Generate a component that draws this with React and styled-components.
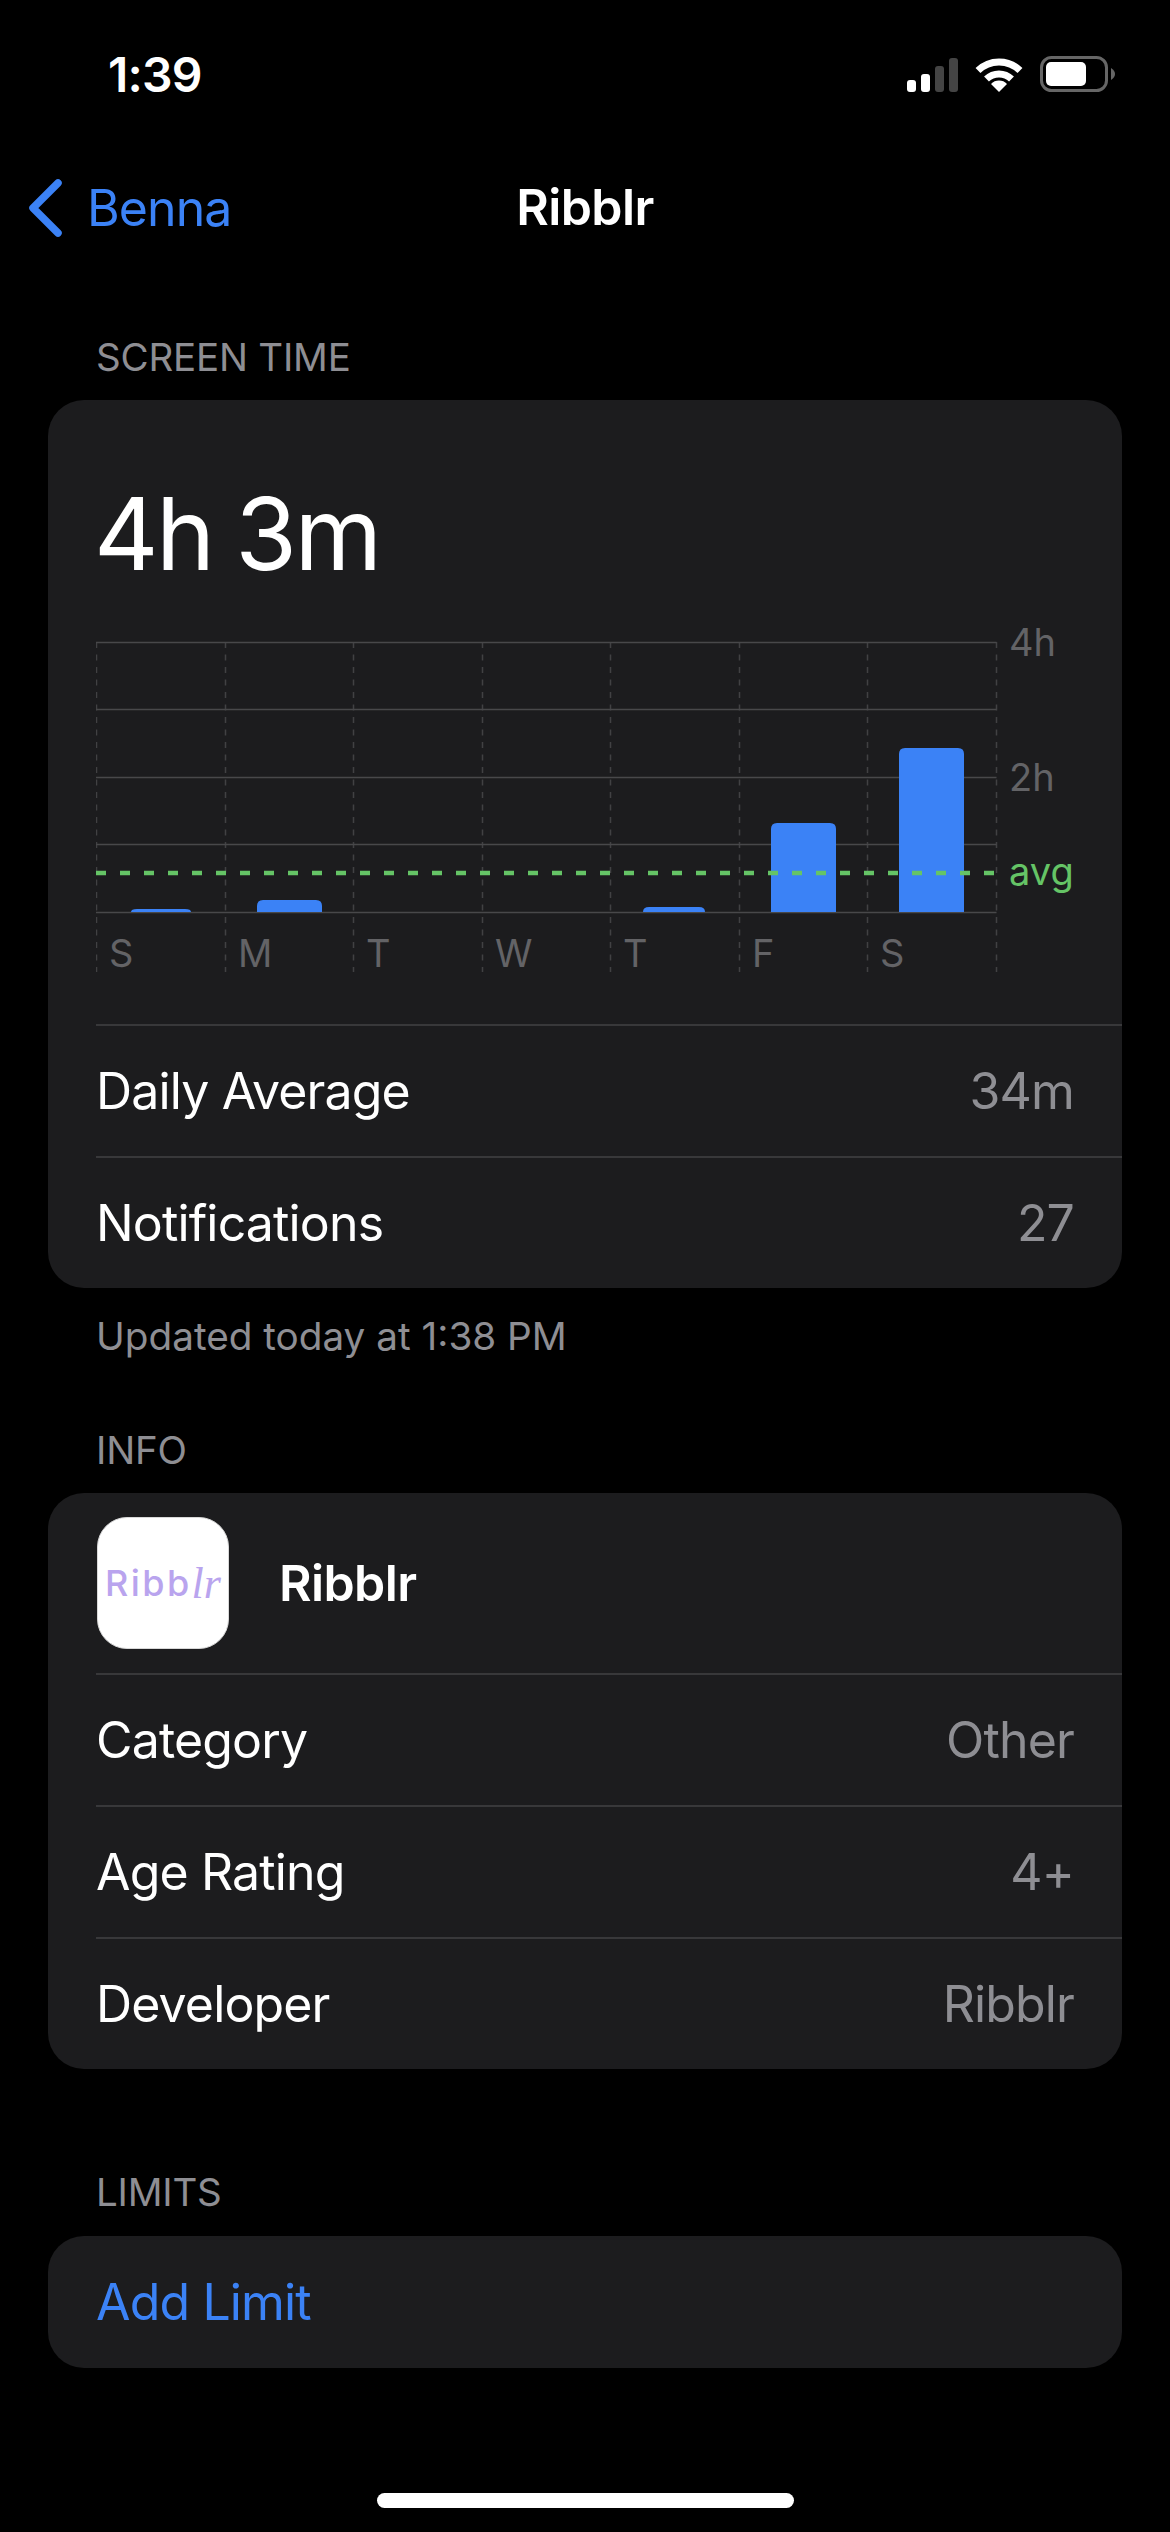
import React from "react";
import styled, { createGlobalStyle } from "styled-components";

const GlobalStyle = createGlobalStyle`
  html, body { margin: 0; padding: 0; background: #000; }
  body { font-family: Inter, "Liberation Sans", sans-serif; -webkit-font-smoothing: antialiased; }
`;

const Page = styled.div`
  width: 1170px;
  height: 2532px;
  background: #000;
  color: #fff;
  overflow: hidden;
  position: relative;
`;

const StatusBar = styled.div`
  height: 148px;
  display: flex;
  align-items: center;
  justify-content: space-between;
  padding: 0 55px 0 108px;
  box-sizing: border-box;
`;

const Clock = styled.div`
  font-size: 48px;
  font-weight: 600;
  letter-spacing: -0.8px;
`;

const StatusIcons = styled.div`
  display: flex;
  align-items: flex-end;
  gap: 17px;
  padding-bottom: 1px;
`;

const NavBar = styled.div`
  height: 118px;
  position: relative;
  display: flex;
  align-items: center;
  justify-content: center;
`;

const BackLink = styled.div`
  position: absolute;
  left: 28px;
  top: 30px;
  display: flex;
  align-items: center;
  gap: 25px;
  color: #3b82f6;
  font-size: 50px;
  letter-spacing: -0.9px;
`;

const NavTitle = styled.div`
  font-size: 50px;
  font-weight: 600;
  letter-spacing: -0.6px;
`;

const SectionLabel = styled.div`
  height: 46px;
  line-height: 46px;
  margin: ${(p) => p.$top}px 0 ${(p) => p.$bottom}px 96px;
  font-size: 38.5px;
  color: #8e8e93;
  letter-spacing: -0.2px;
`;

const Card = styled.div`
  margin: 0 48px;
  background: #1c1c1e;
  border-radius: 36px;
  overflow: hidden;
`;

const BigTime = styled.div`
  height: 220px;
  padding: 46px 0 0 46px;
  display: flex;
  align-items: center;
  font-size: 100px;
  letter-spacing: -2.5px;
  word-spacing: -3px;
  box-sizing: border-box;
`;

const ChartWrap = styled.div`
  margin-left: 48px;
  height: 404px;
  svg { display: block; }
`;

const Row = styled.div`
  height: 132px;
  box-sizing: border-box;
  margin-left: 48px;
  padding-right: 48px;
  display: flex;
  align-items: center;
  justify-content: space-between;
  font-size: 50px;
  letter-spacing: -0.85px;
  border-top: ${(p) => (p.$first ? "none" : "2px solid #38383a")};
`;

const RowValue = styled.span`
  color: #8e8e93;
`;

const Footnote = styled.div`
  height: 46px;
  line-height: 46px;
  margin: 25px 0 0 96px;
  font-size: 38.7px;
  color: #8e8e93;
`;

const AppRow = styled.div`
  height: 180px;
  box-sizing: border-box;
  padding: 0 0 0 49px;
  display: flex;
  align-items: center;
  gap: 50px;
`;

const AppIcon = styled.div`
  width: 132px;
  height: 132px;
  box-sizing: border-box;
  border-radius: 30px;
  border: 1px solid #d8d8d8;
  background: #fff;
  display: flex;
  align-items: center;
  justify-content: center;
  color: #b9a4ee;
  font-size: 36px;
  font-weight: 500;
  letter-spacing: 2.4px;
`;

const ScriptPart = styled.span`
  font-family: "Liberation Serif", serif;
  font-style: italic;
  font-size: 44px;
  letter-spacing: 0;
`;

const AppName = styled.div`
  font-size: 50px;
  font-weight: 600;
  letter-spacing: -0.6px;
`;

const LinkText = styled.span`
  color: #3b82f6;
`;

const HomeIndicator = styled.div`
  position: absolute;
  left: 377px;
  top: 2493px;
  width: 417px;
  height: 15px;
  border-radius: 8px;
  background: #fff;
`;

const SignalIcon = () => (
  <svg width="51" height="34" viewBox="0 0 51 34">
    <rect x="0" y="22" width="9" height="12" rx="3" fill="#fff" />
    <rect x="14" y="16" width="9" height="18" rx="3" fill="#fff" />
    <rect x="28" y="8" width="9" height="26" rx="3" fill="#444" />
    <rect x="42" y="0" width="9" height="34" rx="3" fill="#444" />
  </svg>
);

const WifiIcon = () => (
  <svg width="48" height="34" viewBox="0 0 48 34" fill="none">
    <path d="M3 12.5 A30 30 0 0 1 45 12.5" stroke="#fff" strokeWidth="7" />
    <path d="M11.5 21 A18 18 0 0 1 36.5 21" stroke="#fff" strokeWidth="7" />
    <path d="M24 34 L16 26 A11 11 0 0 1 32 26 Z" fill="#fff" />
  </svg>
);

const BatteryIcon = () => (
  <svg width="75" height="36" viewBox="0 0 75 36">
    <rect x="1.5" y="1.5" width="65" height="33" rx="10" fill="none" stroke="#666" strokeWidth="3" />
    <rect x="6" y="6" width="40" height="24" rx="5" fill="#fff" />
    <path d="M71 12 C74 14 75 16 75 18 C75 20 74 22 71 24 Z" fill="#666" />
  </svg>
);

const ChevronIcon = () => (
  <svg width="34" height="58" viewBox="0 0 34 58" fill="none">
    <path d="M30 4 L5 29 L30 54" stroke="#3b82f6" strokeWidth="7.5" strokeLinecap="round" strokeLinejoin="round" />
  </svg>
);

// chart coordinates are local to the svg: x0 = 96 on the page, y0 = 620
const COL = 128.57;
const LEFT = 0.5;
const RIGHT = 900.5;
const gridYs = [22.5, 89.5, 157.5, 224.5, 292.5];
const days = ["S", "M", "T", "W", "T", "F", "S"];
const bars = [
  { x: 35, w: 60, top: 289 },
  { x: 161, w: 65, top: 280 },
  { x: 547, w: 62, top: 287 },
  { x: 675, w: 65, top: 203 },
  { x: 803, w: 65, top: 128 },
];

const ScreenChart = () => (
  <svg width="1026" height="404" viewBox="0 0 1026 404" fontFamily="Inter, sans-serif">
    {Array.from({ length: 8 }, (_, i) => LEFT + Math.round(i * COL)).map((x) => (
      <g key={x} stroke="#414143" strokeWidth="1.5" strokeDasharray="6 6.5">
        <line x1={x} x2={x} y1={22} y2={292} />
        <line x1={x} x2={x} y1={297} y2={352} />
      </g>
    ))}
    {gridYs.map((y) => (
      <line key={y} x1={0} x2={RIGHT} y1={y} y2={y} stroke="#48484a" strokeWidth="1.5" />
    ))}
    {bars.map((b) => (
      <path
        key={b.x}
        d={`M${b.x} 292 V${b.top + Math.min(6, 292 - b.top)} Q${b.x} ${b.top} ${b.x + 6} ${b.top} H${b.x + b.w - 6} Q${b.x + b.w} ${b.top} ${b.x + b.w} ${b.top + Math.min(6, 292 - b.top)} V292 Z`}
        fill="#3b82f6"
      />
    ))}
    <line x1={0} x2={RIGHT} y1={253} y2={253} stroke="#65c466" strokeWidth="4.5" strokeDasharray="10 14" />
    <g fontSize="38" fill="#636366">
      <text x={913} y={36}>4h</text>
      <text x={913} y={171}>2h</text>
      {days.map((d, i) => (
        <text key={i} x={13 + Math.round(i * COL)} y={347}>{d}</text>
      ))}
    </g>
    <text x={913} y={265} fontSize="38" fill="#65c466">avg</text>
  </svg>
);

const App = () => (
  <Page>
    <GlobalStyle />
    <StatusBar>
      <Clock>1:39</Clock>
      <StatusIcons>
        <SignalIcon />
        <WifiIcon />
        <BatteryIcon />
      </StatusIcons>
    </StatusBar>
    <NavBar>
      <BackLink>
        <ChevronIcon />
        <span>Benna</span>
      </BackLink>
      <NavTitle>Ribblr</NavTitle>
    </NavBar>

    <SectionLabel $top={68} $bottom={20}>SCREEN TIME</SectionLabel>
    <Card>
      <BigTime>4h 3m</BigTime>
      <ChartWrap>
        <ScreenChart />
      </ChartWrap>
      <Row><span>Daily Average</span><RowValue>34m</RowValue></Row>
      <Row><span>Notifications</span><RowValue>27</RowValue></Row>
    </Card>
    <Footnote>Updated today at 1:38 PM</Footnote>

    <SectionLabel $top={68} $bottom={20}>INFO</SectionLabel>
    <Card>
      <AppRow>
        <AppIcon>Ribb<ScriptPart>lr</ScriptPart></AppIcon>
        <AppName>Ribblr</AppName>
      </AppRow>
      <Row><span>Category</span><RowValue>Other</RowValue></Row>
      <Row><span>Age Rating</span><RowValue>4+</RowValue></Row>
      <Row><span>Developer</span><RowValue>Ribblr</RowValue></Row>
    </Card>

    <SectionLabel $top={100} $bottom={21}>LIMITS</SectionLabel>
    <Card>
      <Row $first><LinkText>Add Limit</LinkText></Row>
    </Card>

    <HomeIndicator />
  </Page>
);

export default App;
